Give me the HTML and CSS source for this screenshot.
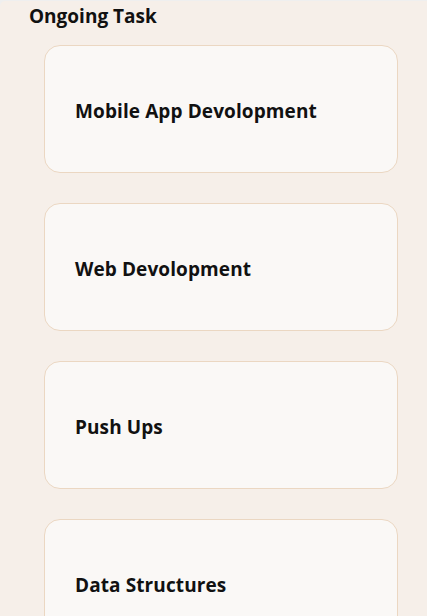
FILE: index.html
```html
<!DOCTYPE html>
<html>
<head>
<meta charset="utf-8">
<link rel="stylesheet" href="styles.css">
</head>
<body>
<div class="panel">
  <h2 class="title">Ongoing Task</h2>
  <div class="list">
    <div class="card"><span class="card-title">Mobile App Devolopment</span></div>
    <div class="card"><span class="card-title">Web Devolopment</span></div>
    <div class="card"><span class="card-title">Push Ups</span></div>
    <div class="card"><span class="card-title">Data Structures</span></div>
  </div>
</div>
</body>
</html>
```
FILE: styles.css
```css
html, body {
  margin: 0;
  padding: 0;
  background: #efefef;
  height: 100%;
  overflow: hidden;
}
body {
  font-family: "Open Sans", "Noto Sans", sans-serif;
  color: #111;
}
.panel {
  margin-top: 1px;
  background: #f6efe9;
  border-top-left-radius: 5px;
  min-height: 700px;
  padding: 3px 29px 0 29px;
}
.title {
  margin: 0;
  font-size: 19px;
  font-weight: 700;
  line-height: 24px;
}
.list {
  margin-top: 17px;
  margin-left: 15px;
  display: flex;
  flex-direction: column;
  gap: 30px;
}
.card {
  box-sizing: border-box;
  height: 128px;
  background: #faf8f6;
  border: 1px solid #ebd7c2;
  border-radius: 16px;
  display: flex;
  align-items: center;
  padding: 4px 30px 0;
}
.card-title {
  font-size: 19px;
  font-weight: 700;
  letter-spacing: 0.1px;
}
```
